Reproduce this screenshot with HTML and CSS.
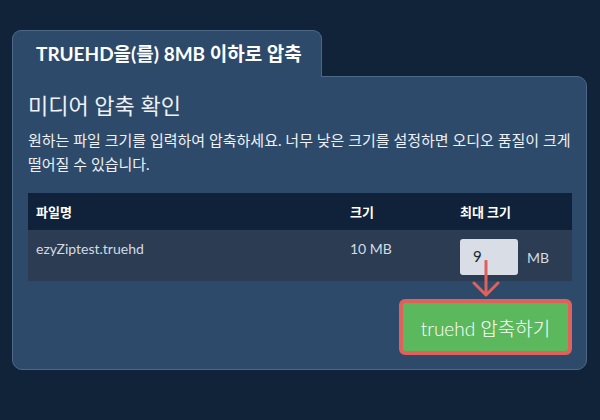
FILE: index.html
```html
<!DOCTYPE html>
<html lang="ko">
<head>
<meta charset="utf-8">
<link rel="stylesheet" href="styles.css">
</head>
<body>
<div class="wrap">
  <div class="tab">TRUEHD을(를) 8MB 이하로 압축</div>
  <div class="panel">
    <h2 class="title">미디어 압축 확인</h2>
    <p class="desc">원하는 파일 크기를 입력하여 압축하세요. 너무 낮은 크기를 설정하면 오디오 품질이 크게 떨어질 수 있습니다.</p>
    <table class="files">
      <thead>
        <tr><th class="c-name">파일명</th><th class="c-size">크기</th><th class="c-max">최대 크기</th></tr>
      </thead>
      <tbody>
        <tr>
          <td class="c-name">ezyZiptest.truehd</td>
          <td class="c-size">10 MB</td>
          <td class="c-max">
            <div class="maxbox">
              <div class="num">9</div>
              <span class="unit">MB</span>
            </div>
          </td>
        </tr>
      </tbody>
    </table>
    <div class="actions">
      <button class="go">truehd 압축하기</button>
    </div>
    <svg class="arrow" width="30" height="40" viewBox="0 0 30 40">
      <path d="M15 1 V35 M3 23 L15 35 L27 23" fill="none" stroke="#e0615b" stroke-width="3" stroke-linecap="round" stroke-linejoin="round"/>
    </svg>
  </div>
</div>
</body>
</html>
```
FILE: styles.css
```css
html, body {
  margin: 0;
  padding: 0;
  background: #112338;
  height: 100%;
}
body {
  font-family: Lato, "Noto Sans CJK KR", sans-serif;
  color: #ffffff;
}
.wrap {
  padding: 30px 0 0 12px;
  width: 575px;
}
.tab {
  display: inline-block;
  position: relative;
  z-index: 2;
  box-sizing: border-box;
  height: 47px;
  padding: 0 0 0 23px;
  line-height: 46px;
  font-size: 19px;
  font-weight: 700;
  background: #2d4a6a;
  border: 1px solid #4e6988;
  border-bottom: none;
  border-radius: 9px 9px 0 0;
  margin-bottom: -1px;
  width: 310px;
  white-space: nowrap;
}
.panel {
  position: relative;
  box-sizing: border-box;
  height: 294px;
  background: #2d4a6a;
  border: 1px solid #4e6988;
  border-radius: 0 10px 10px 10px;
  padding: 15px 14px 0 15px;
}
.title {
  margin: 0;
  font-size: 22px;
  font-weight: 400;
  line-height: 28px;
  color: #eef1f5;
}
.desc {
  margin: 8px 0 17px;
  font-size: 15px;
  line-height: 24px;
  color: #eef1f5;
  word-break: keep-all;
}
.files {
  width: 544px;
  border-collapse: collapse;
  table-layout: fixed;
}
.files th, .files td {
  box-sizing: border-box;
}
.files th {
  background: #10223a;
  height: 37px;
  padding: 0 8px;
  text-align: left;
  font-size: 13px;
  font-weight: 700;
  color: #ffffff;
}
.files td {
  background: #2c3d53;
  height: 51px;
  padding: 10px 8px 0;
  vertical-align: top;
  font-size: 14px;
  line-height: 18px;
  color: #d4dae3;
}
.files .c-name { width: 314px; }
.files .c-size { width: 110px; }
.files .c-max { width: 120px; }
.files td.c-max { padding-top: 9px; }
.maxbox {
  display: flex;
  align-items: center;
  gap: 9px;
}
.num {
  flex: 0 0 auto;
  width: 58px;
  height: 36px;
  box-sizing: border-box;
  background: #d9dde5;
  border-radius: 3px;
  padding: 7px 0 0 13px;
  font-size: 15px;
  line-height: 20px;
  color: #1d2733;
}
.unit {
  font-size: 14px;
  color: #d4dae3;
  margin-top: 2px;
}
.actions {
  display: flex;
  justify-content: flex-end;
  margin-top: 18px;
}
.go {
  box-sizing: border-box;
  width: 173px;
  height: 56px;
  background: #5cb85c;
  border: 4px solid #e0615b;
  border-radius: 6px;
  font-family: Lato, "Noto Sans CJK KR", sans-serif;
  font-size: 19px;
  font-weight: 300;
  color: #ffffff;
  padding: 0;
}
.arrow {
  position: absolute;
  left: 458px;
  top: 183px;
}
```
